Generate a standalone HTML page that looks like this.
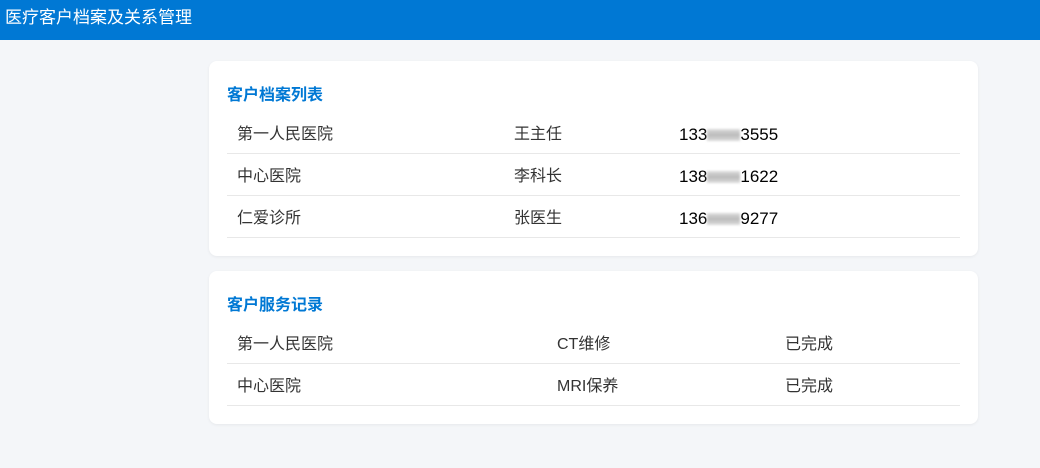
<!DOCTYPE html>
<html><head><meta charset="utf-8"><style>
body{margin:0;width:1040px;height:468px;background:#f4f6f9;font-family:"Liberation Sans","Noto Sans CJK SC",sans-serif;overflow:hidden}
.hd{height:40px;background:#0078d4;color:#fff;font-size:17px;line-height:36px;padding-left:5px}
.card{position:absolute;left:209px;width:769px;background:#fff;border-radius:8px;box-shadow:0 1px 3px rgba(0,0,0,.06)}
.t{position:absolute;left:18px;top:20px;color:#0078d4;font-weight:bold;font-size:16px}
.row{position:absolute;left:18px;width:733px;height:41px;border-bottom:1px solid #e8e8e8;font-size:16px;color:#333}
.row span{position:absolute;top:12px;line-height:22px;height:22px}
.ph{color:#000;font-size:17px}
.bl{display:inline-block;width:33px;height:12px;background:linear-gradient(#ddd,#bbb,#ddd);vertical-align:-1px;filter:blur(1px)}
</style></head><body>
<div class="hd">医疗客户档案及关系管理</div>
<div class="card" style="top:61px;height:195px">
<div class="t">客户档案列表</div>
<div class="row" style="top:51px"><span style="left:10px">第一人民医院</span><span style="left:287px">王主任</span><span class="ph" style="left:452px">133<i class="bl"></i>3555</span></div>
<div class="row" style="top:93px"><span style="left:10px">中心医院</span><span style="left:287px">李科长</span><span class="ph" style="left:452px">138<i class="bl"></i>1622</span></div>
<div class="row" style="top:135px"><span style="left:10px">仁爱诊所</span><span style="left:287px">张医生</span><span class="ph" style="left:452px">136<i class="bl"></i>9277</span></div>
</div>
<div class="card" style="top:271px;height:153px">
<div class="t">客户服务记录</div>
<div class="row" style="top:51px"><span style="left:10px">第一人民医院</span><span style="left:330px">CT维修</span><span style="left:558px">已完成</span></div>
<div class="row" style="top:93px"><span style="left:10px">中心医院</span><span style="left:330px">MRI保养</span><span style="left:558px">已完成</span></div>
</div>
</body></html>
